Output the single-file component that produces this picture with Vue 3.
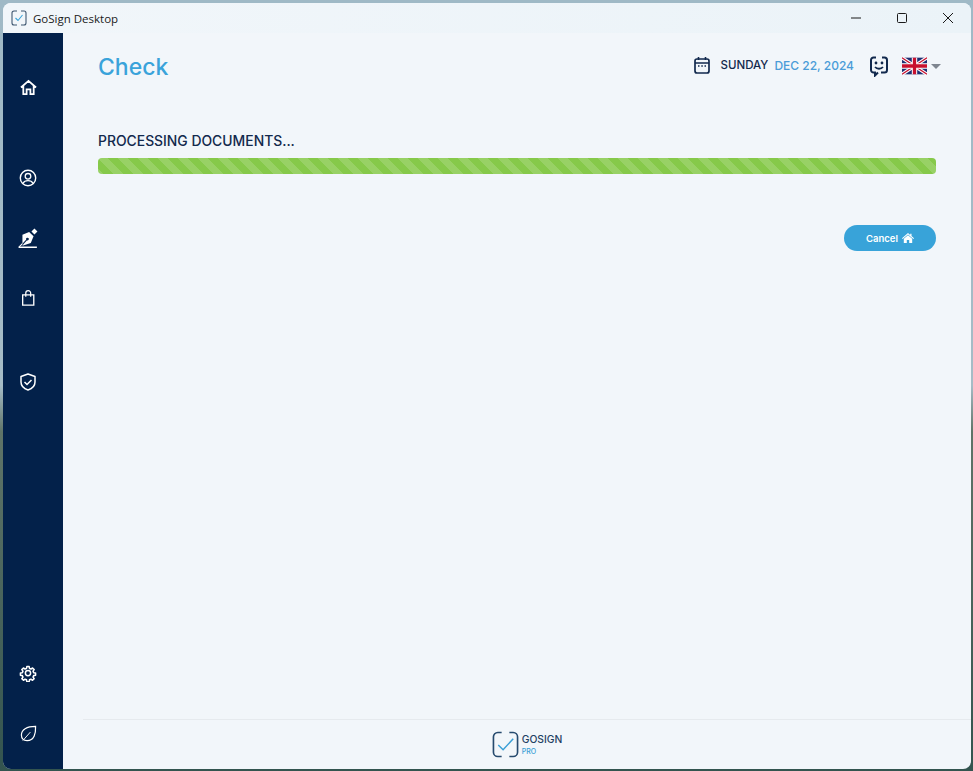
<template>
  <div class="desktop">
    <div class="window">
      <!-- title bar -->
      <header class="titlebar">
        <svg class="app-icon" width="16" height="16" viewBox="0 0 16 16" fill="none">
          <path d="M6 1H3a2 2 0 0 0-2 2v10a2 2 0 0 0 2 2h3M10 1h3a2 2 0 0 1 2 2v10a2 2 0 0 1-2 2h-3" stroke="#3d5670" stroke-width="1.1" />
          <path d="M4.500 8l2.500 2.500 4.500-5.500" stroke="#3aa3d8" stroke-width="1.1" />
        </svg>
        <span class="app-name">GoSign Desktop</span>
        <div class="win-controls">
          <svg width="12" height="12" viewBox="0 0 12 12"><path d="M1 6h10" stroke="#1a1a1a" /></svg>
          <svg width="12" height="12" viewBox="0 0 12 12" fill="none"><rect x="1.500" y="1.500" width="9" height="9" rx="1" stroke="#1a1a1a" /></svg>
          <svg width="12" height="12" viewBox="0 0 12 12"><path d="M1 1l10 10M11 1L1 11" stroke="#1a1a1a" /></svg>
        </div>
      </header>

      <div class="body">
        <!-- left menu -->
        <nav class="sidebar">
          <svg class="nav-icon home" viewBox="0 0 18 18" fill="none">
            <path d="M1 9L9 2l8 7M3.500 7.500V16h3.500v-5h4v5h3.500V7.500" stroke="#fff" stroke-width="1.900" />
          </svg>
          <svg class="nav-icon user" viewBox="0 0 18 18" fill="none">
            <circle cx="9" cy="9" r="7.700" stroke="#fff" stroke-width="1.400" />
            <circle cx="9" cy="7.300" r="2.800" stroke="#fff" stroke-width="1.300" />
            <path d="M3.800 14.500c1.200-2 3-2.800 5.200-2.800s4 .8 5.200 2.800" stroke="#fff" stroke-width="1.300" />
          </svg>
          <svg class="nav-icon pen" viewBox="0 0 18 18" fill="none">
            <path d="M4 6l6-2.500 4 4-2.500 6-7.500 2.500z" fill="#fff" />
            <path d="M3.500 15.500L8 10.500" stroke="#03214a" stroke-width="1" />
            <circle cx="8.500" cy="10" r="1.300" fill="#03214a" />
            <path d="M14.800 .5l2.700 2.700-2.700 2.700-2.700-2.700z" fill="#fff" />
            <path d="M.5 17.300h16.500" stroke="#fff" stroke-width="1.200" />
            <path d="M1 17l3-3" stroke="#fff" stroke-width="1" />
          </svg>
          <svg class="nav-icon bag" viewBox="0 0 18 18" fill="none">
            <path d="M3 5.500h12.500V17H3z" stroke="#fff" stroke-width="1.500" />
            <path d="M6.500 7.500V3.500a2.700 2.700 0 0 1 5.500 0v4" stroke="#fff" stroke-width="1.400" />
          </svg>
          <svg class="nav-icon shield" viewBox="0 0 18 18" fill="none">
            <path d="M9 1l7 2.500V9c0 4-3 6.700-7 8-4-1.300-7-4-7-8V3.500z" stroke="#fff" stroke-width="1.500" stroke-linejoin="round" />
            <path d="M5.500 9l2.500 2.500 4.500-4.500" stroke="#fff" stroke-width="1.500" />
          </svg>
          <svg class="nav-icon gear" viewBox="0 0 24 24" fill="none">
            <path d="M10.300 2.500h3.400l.5 2.800 2.200 .9 2.300-1.600 2.400 2.400-1.600 2.300 .9 2.200 2.800 .5v3.400l-2.800 .5-.9 2.200 1.600 2.300-2.400 2.400-2.300-1.600-2.200 .9-.5 2.800h-3.400l-.5-2.800-2.200-.9-2.300 1.600-2.400-2.400 1.600-2.300-.9-2.200-2.800-.5v-3.400l2.800-.5 .9-2.200-1.600-2.300 2.400-2.400 2.300 1.600 2.200-.9z" transform="translate(1.200 1.200) scale(.9)" stroke="#fff" stroke-width="2.300" stroke-linejoin="round" />
            <circle cx="12" cy="12" r="3.500" stroke="#fff" stroke-width="2" />
          </svg>
          <svg class="nav-icon leaf" viewBox="0 0 18 18" fill="none">
            <path d="M16.500 1.500C16.800 9 15 16.500 7.500 16.500 3.500 16.500 1.500 14 1.500 10.500 1.500 5 7 1.500 16.500 1.500z" stroke="#fff" stroke-width="1.300" />
            <path d="M3 16.500L11 7.500" stroke="#fff" stroke-width="1" />
          </svg>
        </nav>

        <main class="content">
          <div class="page">
            <div class="topbar">
              <h1 class="title">Check</h1>
              <div class="top-right">
                <svg class="calendar" width="18" height="18" viewBox="0 0 18 18" fill="none">
                  <rect x="2" y="3" width="14" height="14" rx="2" stroke="#12294d" stroke-width="1.700" />
                  <path d="M2 7h14M5.500 1v3M12.500 1v3" stroke="#12294d" stroke-width="1.600" />
                  <path d="M5 10h1.500M8.300 10h1.500M11.500 10H13" stroke="#12294d" stroke-width="1.300" />
                </svg>
                <span class="day">SUNDAY</span>
                <span class="date">DEC 22, 2024</span>
                <svg class="chat" width="18" height="21" viewBox="0 0 18 21" fill="none">
                  <path d="M6 1.500H3.500a2.500 2.500 0 0 0-2.500 2.500v10a2.500 2.500 0 0 0 2.500 2.500h1.500v3l3-3M12 1.500h2.500A2.500 2.500 0 0 1 17 4v10a2.500 2.500 0 0 1-2.500 2.500H11" stroke="#12294d" stroke-width="2" />
                  <circle cx="6" cy="7" r="1.400" fill="#12294d" />
                  <circle cx="12" cy="7" r="1.400" fill="#12294d" />
                  <path d="M5 11c2 2.300 6 2.300 8 0" stroke="#12294d" stroke-width="1.800" />
                </svg>
                <svg class="flag" width="25" height="18" viewBox="0 0 60 40">
                  <rect width="60" height="40" fill="#1f2f72" />
                  <path d="M0 0l60 40M60 0L0 40" stroke="#fff" stroke-width="8" />
                  <path d="M0 0l60 40M60 0L0 40" stroke="#c8102e" stroke-width="3" />
                  <path d="M30 0v40M0 20h60" stroke="#fff" stroke-width="13" />
                  <path d="M30 0v40M0 20h60" stroke="#c8102e" stroke-width="8" />
                </svg>
                <span class="caret"></span>
              </div>
            </div>

            <p class="status">PROCESSING DOCUMENTS...</p>
            <div class="progress"></div>

            <div class="actions">
              <button class="cancel">Cancel
                <svg width="12" height="10" viewBox="0 0 12 10"><path d="M6 0l2.200 1.900V.8h1.300v2.200L12 5.200l-.6.700L6 1.400 .6 5.900 0 5.200zM1.800 5.700L6 2.300l4.200 3.400V10H7.200V7H4.800v3h-3z" fill="#fff" /></svg>
              </button>
            </div>
          </div>

          <footer class="footer">
            <svg width="27" height="27" viewBox="0 0 28 28" fill="none">
              <path d="M10 1.500H6a4.500 4.500 0 0 0-4.500 4.500v16a4.500 4.500 0 0 0 4.500 4.500h4M18 1.500h4a4.500 4.500 0 0 1 4.500 4.500v16a4.500 4.500 0 0 1-4.500 4.500h-4" stroke="#264a6e" stroke-width="1.700" />
              <path d="M6.500 14.500l5 5L22 8" stroke="#3a9fd6" stroke-width="1.500" />
            </svg>
            <div class="brand">
              <span class="brand-name">GOSIGN</span>
              <span class="brand-pro">PRO</span>
            </div>
          </footer>
        </main>
      </div>
    </div>
  </div>
</template>

<script setup>
</script>

<style>
html, body {
  margin: 0;
  overflow: hidden;
}
</style>

<style scoped>
.desktop {
  width: 973px;
  height: 771px;
  box-sizing: border-box;
  padding: 3px 2px 2px 3px;
  background: linear-gradient(180deg, #9fb9c6 0%, #a6bcc6 50%, #5f7468 56%, #33544f 100%);
}

.window {
  height: 100%;
  display: flex;
  flex-direction: column;
  border-radius: 8px;
  overflow: hidden;
  background: #f2f6fa;
}

.titlebar {
  height: 30px;
  flex: none;
  display: flex;
  align-items: center;
  padding-left: 8px;
  background: linear-gradient(90deg, #f1f6fa, #ebf3f8);
}

.app-name {
  margin-left: 6px;
  font: 11.500px "Open Sans", "Noto Sans", sans-serif;
  color: #1a1a1a;
}

.win-controls {
  margin-left: auto;
  display: flex;
  gap: 34px;
  padding-right: 17px;
}

.body {
  flex: 1;
  display: flex;
  min-height: 0;
}

.sidebar {
  width: 60px;
  flex: none;
  box-sizing: border-box;
  padding-right: 10px;
  display: flex;
  flex-direction: column;
  align-items: center;
  background: #03214a;
}

.nav-icon {
  display: block;
  width: 16px;
  height: 16px;
}

.home { margin-top: 46px; width: 17px; height: 17px; }
.user { margin-top: 73px; width: 18px; height: 18px; }
.pen { margin-top: 41px; width: 20px; height: 20px; }
.bag { margin-top: 42px; }
.shield { margin-top: 67px; width: 18px; height: 18px; }
.gear { margin-top: auto; width: 18px; height: 18px; }
.leaf { margin-top: 43px; margin-bottom: 27px; width: 17px; height: 17px; }

.content {
  flex: 1;
  min-width: 0;
  display: flex;
  flex-direction: column;
}

.page {
  flex: 1;
  padding: 0 35px;
}

.topbar {
  display: flex;
  align-items: center;
  justify-content: space-between;
  height: 66px;
}

.title {
  margin: 2px 0 0;
  font: 500 23px Inter, "Liberation Sans", sans-serif;
  color: #3aa3da;
}

.top-right {
  display: flex;
  align-items: center;
  margin-right: -5px;
}

.calendar {
  margin-bottom: 2px;
}

.day {
  margin-left: 10px;
  margin-bottom: 2px;
  font: 500 11.500px Inter, sans-serif;
  color: #12294d;
}

.date {
  margin-left: 6px;
  margin-bottom: 2px;
  font: 500 12px Inter, sans-serif;
  color: #4a9cd8;
}

.chat {
  margin-left: 16px;
}

.flag {
  margin-left: 14px;
}

.caret {
  margin-left: 4px;
  border-left: 5px solid transparent;
  border-right: 5px solid transparent;
  border-top: 5px solid #7f8690;
}

.status {
  margin: 34px 0 0;
  font: 500 13.900px/17px Inter, sans-serif;
  color: #12294d;
}

.progress {
  height: 16px;
  margin-top: 8px;
  border-radius: 4px;
  background-color: #86c94a;
  background-image: linear-gradient(45deg,
    rgba(255, 255, 255, .15) 25%, transparent 25%,
    transparent 50%, rgba(255, 255, 255, .15) 50%,
    rgba(255, 255, 255, .15) 75%, transparent 75%);
  background-size: 20px 20px;
}

.actions {
  display: flex;
  justify-content: flex-end;
  margin-top: 51px;
}

.cancel {
  width: 92px;
  height: 26px;
  padding: 0;
  display: flex;
  align-items: center;
  justify-content: center;
  gap: 4px;
  border: 0;
  border-radius: 13px;
  background: #38a3d9;
  color: #fff;
  font: 600 9.500px Inter, sans-serif;
}

.footer {
  flex: none;
  height: 50px;
  margin-left: 20px;
  display: flex;
  align-items: center;
  justify-content: center;
  gap: 3px;
  border-top: 1px solid #e6eaee;
  box-sizing: border-box;
}

.brand {
  display: flex;
  flex-direction: column;
  gap: 1px;
}

.brand-name {
  font: 500 10.300px/13px Inter, sans-serif;
  color: #1f3f63;
}

.brand-pro {
  font: 500 7px/9px Inter, sans-serif;
  color: #3a9fd6;
}
</style>
